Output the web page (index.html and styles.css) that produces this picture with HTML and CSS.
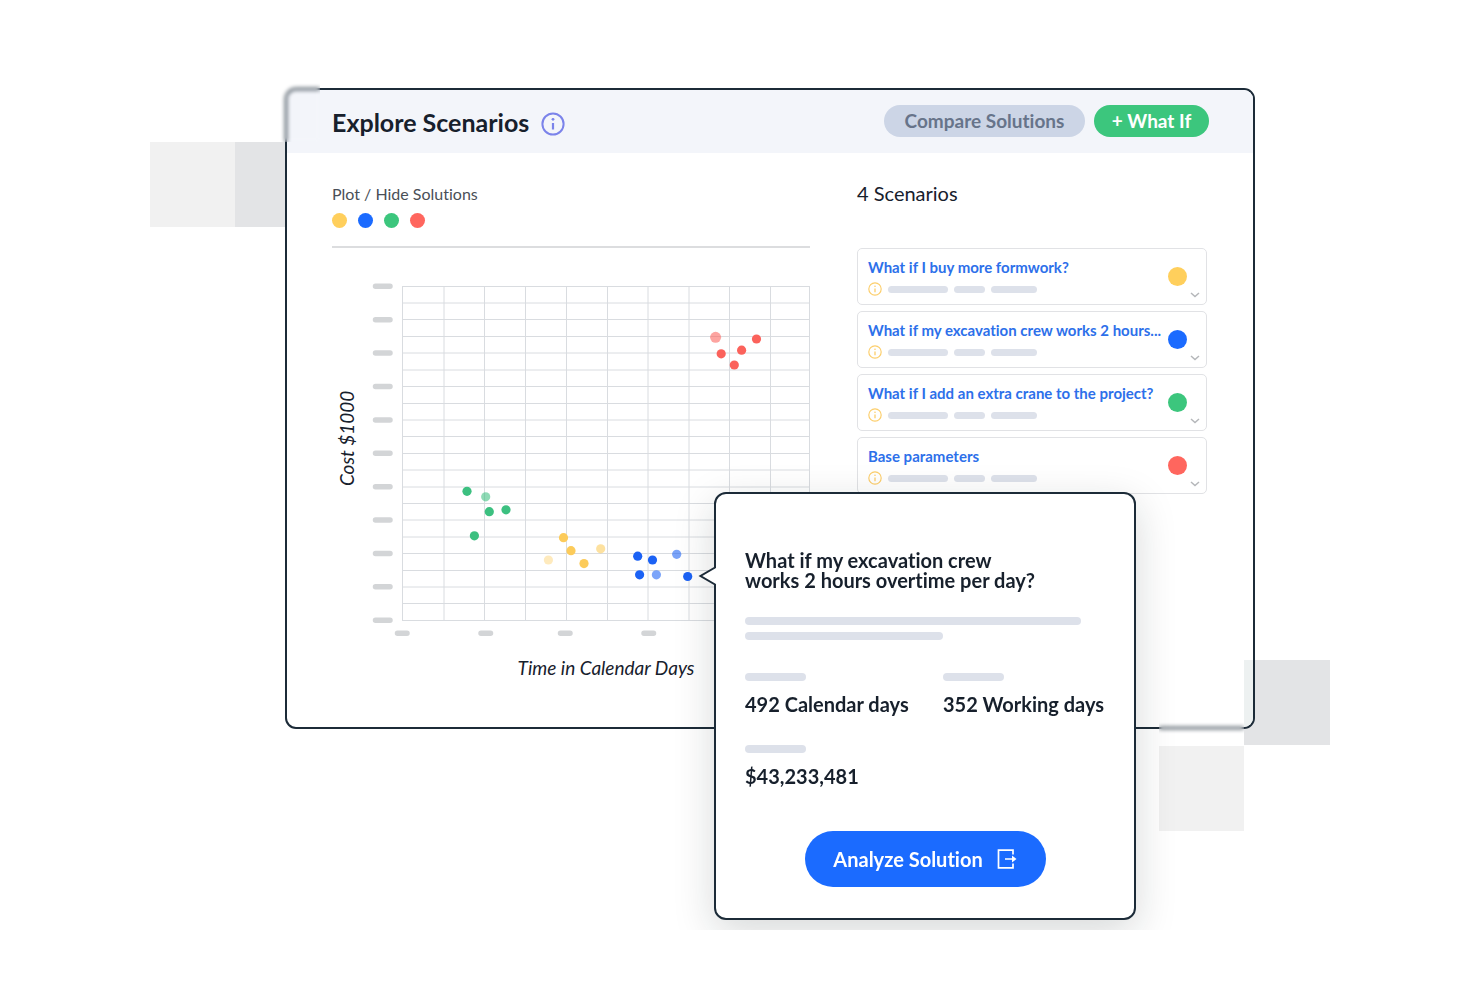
FILE: index.html
```html
<!DOCTYPE html>
<html lang="en">
<head>
<meta charset="utf-8">
<meta name="viewport" content="width=device-width, initial-scale=1">
<title>Explore Scenarios</title>
<link rel="stylesheet" href="styles.css">
</head>
<body>
<svg class="sprite" aria-hidden="true">
  <symbol id="info" viewBox="0 0 24 24"><circle cx="12" cy="12" r="10.600" fill="none" stroke="currentColor" stroke-width="2"/><path d="M12 11v6.500" fill="none" stroke="currentColor" stroke-width="2.200"/><circle cx="12" cy="7.300" r="1.400" fill="currentColor"/></symbol>
  <symbol id="chevron" viewBox="0 0 10 6"><path d="M1 1l4 3.500L9 1" fill="none" stroke="currentColor" stroke-width="1.500"/></symbol>
</svg>
<main class="stage">
  <span class="tile tile-left-light"></span>
  <span class="tile tile-left-dark"></span>
  <span class="tile tile-right-dark"></span>
  <span class="tile tile-right-light"></span>

  <section class="panel">
    <header class="panel-header">
      <h1 class="panel-title">Explore Scenarios</h1>
      <svg class="title-info" role="img" aria-label="Information"><use href="#info"/></svg>
      <div class="actions">
        <button class="pill pill-compare" type="button">Compare Solutions</button>
        <button class="pill pill-whatif" type="button">+ What If</button>
      </div>
    </header>
    <div class="panel-body">
      <section class="plot-column">
        <fieldset class="legend">
          <legend class="legend-title">Plot / Hide Solutions</legend>
          <div class="legend-dots">
            <input class="legend-dot yellow" type="checkbox" checked aria-label="What if I buy more formwork?">
            <input class="legend-dot blue" type="checkbox" checked aria-label="What if my excavation crew works 2 hours overtime per day?">
            <input class="legend-dot green" type="checkbox" checked aria-label="What if I add an extra crane to the project?">
            <input class="legend-dot red" type="checkbox" checked aria-label="Base parameters">
          </div>
        </fieldset>
        <div class="chart">
          <div class="y-label">Cost $1000</div>
          <svg class="plot" viewBox="370 282 440 355" role="img" aria-label="Cost against time in calendar days">
            <path class="grid-lines" d="M402.500 286.500H810M402.500 303H810M402.500 319.500H810M402.500 336.500H810M402.500 353H810M402.500 370H810M402.500 386.500H810M402.500 403.500H810M402.500 420H810M402.500 436.500H810M402.500 453.500H810M402.500 470H810M402.500 487H810M402.500 503.500H810M402.500 520H810M402.500 537H810M402.500 553.500H810M402.500 570.500H810M402.500 587H810M402.500 603.500H810M402.500 620.500H810"/>
            <path class="grid-lines" d="M402.500 286V621M444 286V621M484.500 286V621M525.500 286V621M566.500 286V621M607.500 286V621M648 286V621M689 286V621M729.500 286V621M770.500 286V621M809.500 286V621"/>
            <path class="y-ticks" d="M375.500 286.300h14.500M375.500 319.700h14.500M375.500 353.100h14.500M375.500 386.500h14.500M375.500 419.900h14.500M375.500 453.300h14.500M375.500 486.700h14.500M375.500 520h14.500M375.500 553.400h14.500M375.500 586.800h14.500M375.500 620.300h14.500"/>
            <path class="x-ticks" d="M397.500 633.300h9.500M481 633.300h9.500M560.500 633.300h9.500M644 633.300h9.500"/>
            <g class="fill-green"><circle cx="467" cy="491.300" r="4.600"/><circle class="half" cx="485.700" cy="496.800" r="4.600"/><circle cx="489.300" cy="511.700" r="4.600"/><circle cx="506" cy="509.800" r="4.600"/><circle cx="474.400" cy="535.800" r="4.600"/></g>
            <g class="fill-yellow"><circle cx="563.500" cy="537.700" r="4.600"/><circle cx="571" cy="550.700" r="4.600"/><circle cx="584" cy="563.600" r="4.600"/><circle class="half" cx="600.700" cy="548.800" r="4.600"/><circle class="faint" cx="548.400" cy="560" r="4.600"/></g>
            <g class="fill-blue"><circle cx="637.700" cy="556.200" r="4.600"/><circle cx="652.500" cy="560" r="4.600"/><circle cx="639.600" cy="574.800" r="4.600"/><circle class="half" cx="656.400" cy="574.800" r="4.600"/><circle class="half" cx="676.700" cy="554.300" r="4.600"/><circle cx="687.700" cy="576.500" r="4.600"/></g>
            <g class="fill-red"><circle class="half" cx="715.600" cy="337.300" r="5.500"/><circle cx="721.200" cy="353.800" r="4.600"/><circle cx="734.300" cy="365" r="4.600"/><circle cx="741.600" cy="350.200" r="4.600"/><circle cx="756.500" cy="339" r="4.600"/></g>
          </svg>
          <div class="x-label">Time in Calendar Days</div>
        </div>
      </section>
      <section class="scenario-column">
        <h2 class="scenario-heading">4 Scenarios</h2>
        <ul class="scenarios">
          <li class="card">
            <div class="card-main"><a class="card-title" href="#formwork">What if I buy more formwork?</a>
              <div class="card-meta"><svg class="card-info"><use href="#info"/></svg><span class="bar bar-m"></span><span class="bar bar-xs"></span><span class="bar bar-s"></span></div></div>
            <span class="card-dot yellow"></span>
            <button class="expand" type="button" aria-label="Expand"><svg class="chevron"><use href="#chevron"/></svg></button>
          </li>
          <li class="card">
            <div class="card-main"><a class="card-title" href="#excavation">What if my excavation crew works 2 hours...</a>
              <div class="card-meta"><svg class="card-info"><use href="#info"/></svg><span class="bar bar-m"></span><span class="bar bar-xs"></span><span class="bar bar-s"></span></div></div>
            <span class="card-dot blue"></span>
            <button class="expand" type="button" aria-label="Expand"><svg class="chevron"><use href="#chevron"/></svg></button>
          </li>
          <li class="card">
            <div class="card-main"><a class="card-title" href="#crane">What if I add an extra crane to the project?</a>
              <div class="card-meta"><svg class="card-info"><use href="#info"/></svg><span class="bar bar-m"></span><span class="bar bar-xs"></span><span class="bar bar-s"></span></div></div>
            <span class="card-dot green"></span>
            <button class="expand" type="button" aria-label="Expand"><svg class="chevron"><use href="#chevron"/></svg></button>
          </li>
          <li class="card">
            <div class="card-main"><a class="card-title" href="#base">Base parameters</a>
              <div class="card-meta"><svg class="card-info"><use href="#info"/></svg><span class="bar bar-m"></span><span class="bar bar-xs"></span><span class="bar bar-s"></span></div></div>
            <span class="card-dot red"></span>
            <button class="expand" type="button" aria-label="Expand"><svg class="chevron"><use href="#chevron"/></svg></button>
          </li>
        </ul>
      </section>
    </div>
    <span class="corner-tint"></span>
  </section>

  <span class="tile glass-top"></span>
  <span class="tile glass-bottom"></span>

  <aside class="popover">
    <svg class="pointer" viewBox="0 0 20 22" aria-hidden="true"><path d="M20 1.500L18.500 2L2 11L18.500 20L20 20.500Z" fill="#fff"/><path d="M17 0V2.500L2.500 11L17 19.500V22" fill="none" stroke="#1c2b38" stroke-width="2"/></svg>
    <h2 class="popover-title">What if my excavation crew<br>works 2 hours overtime per day?</h2>
    <div class="summary"><span class="bar bar-full"></span><span class="bar bar-part"></span></div>
    <div class="stats">
      <div class="stat"><span class="bar bar-label"></span>492 Calendar days</div>
      <div class="stat"><span class="bar bar-label"></span>352 Working days</div>
      <div class="stat"><span class="bar bar-label"></span>$43,233,481</div>
    </div>
    <button class="analyze" type="button">Analyze Solution
      <svg class="exit" viewBox="0 0 20 20" aria-hidden="true"><path d="M16 5.500V1.200H1.500V18.800H16V14.500M8 10H17" fill="none" stroke="currentColor" stroke-width="1.700"/><path d="M15 6.500L19.500 10L15 13.500Z" fill="currentColor"/></svg>
    </button>
  </aside>
</main>
</body>
</html>
```
FILE: styles.css
```css
* { box-sizing: border-box; }

body {
  margin: 0;
  background: #fff;
  color: #17202c;
  font-family: Lato, "Open Sans", sans-serif;
  font-variant-ligatures: none;
}

h1, h2, ul, fieldset, legend { margin: 0; padding: 0; border: 0; }
button { border: 0; padding: 0; font: inherit; font-variant-ligatures: none; cursor: pointer; }

.sprite { display: none; }

.stage {
  position: relative;
  max-width: 1180px;
  margin: 0 auto;
  padding: 88px 75px 201px 135px;
  overflow: hidden;
}

.yellow { background: #ffcf5c; }
.blue { background: #1b6bff; }
.green { background: #3cc67d; }
.red { background: #ff665e; }

/* Decorative squares around the panel */
.tile { position: absolute; width: 85px; height: 85px; }
.tile-left-light { left: 0; top: 142px; background: #f1f1f1; }
.tile-left-dark { left: 85px; top: 142px; background: #e3e4e6; }
.tile-right-dark { right: 0; top: 660px; width: 86px; background: #e3e4e6; }
.tile-right-light { right: 86px; top: 746px; background: #f1f1f1; }
.glass-top { left: 85px; top: 57px; backdrop-filter: blur(2px); }
.glass-bottom { right: 86px; top: 660px; backdrop-filter: blur(2px); }

.panel {
  position: relative;
  border: 2px solid #1c2b38;
  border-radius: 11px;
  background: #fff;
  overflow: hidden;
}

.corner-tint {
  position: absolute;
  right: 0;
  bottom: 0;
  width: 9px;
  height: 67px;
  background: #edf1f1;
}

.panel-header {
  display: flex;
  align-items: center;
  height: 63px;
  padding: 0 44px 0 45px;
  background: #f3f5fa;
}

.panel-title { font-size: 25px; line-height: 28px; font-weight: 700; }
.title-info { width: 24px; height: 24px; margin: 4px 0 0 12px; color: #7b83ea; }
.actions { display: flex; gap: 9px; margin: 0 0 2px auto; }

.pill {
  height: 32px;
  border-radius: 16px;
  font-size: 19px;
  line-height: 30px;
  font-weight: 700;
}
.pill-compare { width: 201px; background: #ccd5e6; color: #67748a; }
.pill-whatif { width: 115px; background: #3cc67d; color: #fff; }

.panel-body {
  display: grid;
  grid-template-columns: 478fr 350fr;
  gap: 47px;
  padding: 29px 46px 48px 45px;
}

.legend {
  padding-bottom: 18px;
  border-bottom: 2px solid #dcdddf;
}
.legend-title { font-size: 16px; line-height: 24px; color: #4a4f57; }
.legend-dots { display: flex; gap: 11px; padding-top: 7px; }
.legend-dot {
  appearance: none;
  width: 15px;
  height: 15px;
  margin: 0;
  border-radius: 50%;
}

.chart {
  display: grid;
  grid-template-columns: 38px 1fr;
  padding-top: 34px;
  font-size: 19px;
  font-style: italic;
  line-height: 22px;
}
.y-label {
  display: flex;
  align-items: center;
  justify-content: center;
  writing-mode: vertical-rl;
  transform: rotate(180deg);
  padding-top: 42px;
  width: 30px;
}
.plot { display: block; width: 100%; }
.x-label { grid-column: 2; padding: 20px 0 0 32px; text-align: center; }

.grid-lines { fill: none; stroke: #d9dce0; stroke-width: 1; }
.y-ticks, .x-ticks { fill: none; stroke: #d3d5d7; stroke-width: 5.500; stroke-linecap: round; }
.fill-green { fill: #3cc080; }
.fill-yellow { fill: #fccb5a; }
.fill-blue { fill: #1b62f5; }
.fill-red { fill: #fb625b; }
.half { opacity: .58; }
.faint { opacity: .4; }

.scenario-heading { font-size: 20px; line-height: 22px; font-weight: 400; }
.scenarios {
  display: grid;
  gap: 6px;
  margin-top: 44px;
  list-style: none;
}
.card {
  display: flex;
  align-items: center;
  height: 57px;
  padding: 0 6px 0 10px;
  border: 1px solid #e1e2e5;
  border-radius: 5px;
}
.card-main { flex: 1; white-space: nowrap; }
.card-title {
  display: block;
  font-size: 15px;
  line-height: 20px;
  font-weight: 700;
  color: #2d70ea;
  text-decoration: none;
}
.card-meta { display: flex; align-items: center; gap: 6px; padding-top: 5px; }
.card-info { width: 14px; height: 14px; color: #fcce6b; }
.card-dot { width: 19px; height: 19px; border-radius: 50%; }
.expand { align-self: flex-end; display: flex; margin: 0 0 6px 3px; background: none; color: #b5b7ba; }
.chevron { width: 10px; height: 6px; }

.bar { display: block; height: 7px; border-radius: 4px; background: #dde1ea; }
.bar-m { width: 60px; }
.bar-xs { width: 31px; }
.bar-s { width: 46px; }
.bar-full { width: 336px; height: 8px; }
.bar-part { width: 198px; height: 8px; }
.bar-label { width: 61px; height: 8px; margin-bottom: 11px; }

.popover {
  position: absolute;
  top: 492px;
  right: 194px;
  width: 422px;
  padding: 56px 29px 31px;
  border: 2px solid #1c2b38;
  border-radius: 12px;
  background: #fff;
  box-shadow: 0 12px 40px rgba(20, 30, 30, .17);
}
.pointer { position: absolute; left: -18px; top: 71px; width: 20px; height: 22px; }
.popover-title { font-size: 20px; line-height: 20px; font-weight: 700; }
.summary { display: grid; gap: 7px; padding-top: 27px; }
.stats {
  display: grid;
  grid-template-columns: 198px 1fr;
  row-gap: 29px;
  padding-top: 33px;
  font-size: 20px;
  line-height: 24px;
  font-weight: 700;
  white-space: nowrap;
}
.analyze {
  display: flex;
  align-items: center;
  justify-content: center;
  gap: 14px;
  width: 241px;
  height: 56px;
  margin: 43px auto 0;
  border-radius: 28px;
  background: #1b6bff;
  color: #fff;
  font-size: 20px;
  font-weight: 700;
}
.exit { width: 20px; height: 20px; }
```
